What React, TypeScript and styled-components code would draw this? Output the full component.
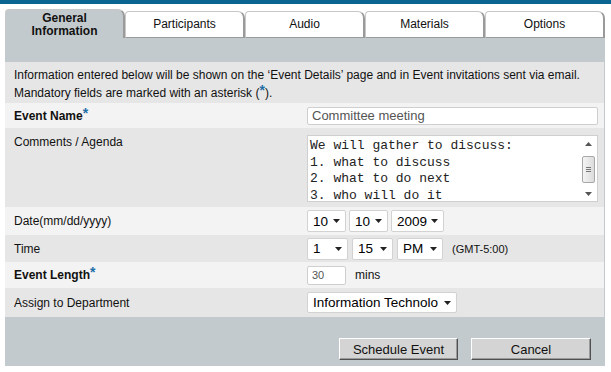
import React from 'react'
import styled, { createGlobalStyle } from 'styled-components'

const GlobalStyle = createGlobalStyle`
  html, body {
    margin: 0;
    padding: 0;
    background: #ffffff;
    font-family: Arial, "Liberation Sans", sans-serif;
    color: #000;
  }
`

const TopBar = styled.div`
  height: 4px;
  background: #0a6690;
`

const Wrapper = styled.div`
  width: 600px;
  margin-left: 5px;
`

const TabRow = styled.div`
  display: flex;
  align-items: flex-end;
  height: 29px;
  margin-top: 5px;
`

const Tab = styled.div<{ $active?: boolean }>`
  box-sizing: border-box;
  width: 120px;
  height: ${p => (p.$active ? '29px' : '27px')};
  display: flex;
  flex-direction: column;
  align-items: center;
  justify-content: center;
  text-align: center;
  background: ${p => (p.$active ? '#c3cacd' : '#ffffff')};
  border: 1px solid #c8c8c8;
  border-right: 2px solid #9a9a9a;
  border-bottom: ${p => (p.$active ? 'none' : '1px solid #9a9a9a')};
  border-radius: 4px 7px 0 0;
  font-size: 12px;
  font-weight: ${p => (p.$active ? 'bold' : 'normal')};
  line-height: 13px;
  color: #111;
  padding-top: ${p => (p.$active ? '1px' : '0')};
`

const Panel = styled.div`
  background: #c3cacd;
  padding-top: 24px;
  padding-bottom: 6px;
`

const Rows = styled.div`
  margin-right: 1px;
`

const Row = styled.div<{ $light?: boolean; $h: number; $top?: boolean }>`
  display: grid;
  grid-template-columns: 302px 1fr;
  align-items: ${p => (p.$top ? 'start' : 'center')};
  height: ${p => p.$h}px;
  box-sizing: border-box;
  background: ${p => (p.$light ? '#f3f3f3' : '#e6e6e6')};
`

const Intro = styled.div`
  background: #e6e6e6;
  height: 41px;
  box-sizing: border-box;
  padding: 4px 9px 0 9px;
  font-size: 12px;
  line-height: 18px;
  color: #111;
`

const Star = styled.span`
  color: #1f6fa8;
  font-weight: bold;
  font-size: 14px;
  position: relative;
  top: -2px;
  line-height: 0;
`

const Label = styled.div<{ $bold?: boolean; $pt?: number }>`
  padding-left: 9px;
  padding-top: ${p => p.$pt ?? 0}px;
  font-size: 12px;
  font-weight: ${p => (p.$bold ? 'bold' : 'normal')};
  color: #111;
`

const Field = styled.div<{ $pt?: number; $gap?: number }>`
  display: flex;
  align-items: center;
  gap: ${p => p.$gap ?? 3}px;
  padding-right: 6px;
  padding-top: ${p => p.$pt ?? 0}px;
`

const TextInput = styled.div<{ $w: string; $h: number; $size: number }>`
  box-sizing: border-box;
  width: ${p => p.$w};
  height: ${p => p.$h}px;
  background: #fff;
  border: 1px solid #cfcfcf;
  border-radius: 2px;
  font-size: ${p => p.$size}px;
  color: #555;
  padding-left: 4px;
  display: flex;
  align-items: center;
`

const TextArea = styled.div`
  box-sizing: border-box;
  width: 291px;
  height: 67px;
  background: #fff;
  border: 1px solid #cfcfcf;
  display: flex;
`

const AreaText = styled.div`
  flex: 1;
  font-family: "Liberation Mono", "Courier New", monospace;
  font-size: 13px;
  line-height: 16.5px;
  color: #222;
  padding: 2px 0 0 2px;
  white-space: pre;
  overflow: hidden;
`

const ScrollBar = styled.div`
  width: 16px;
  display: flex;
  flex-direction: column;
  align-items: center;
  justify-content: space-between;
  padding: 6px 0 5px;
  margin-right: 1px;
`

const Thumb = styled.div`
  box-sizing: border-box;
  width: 13px;
  height: 27px;
  border: 1px solid #a8a8a8;
  border-radius: 2px;
  background: linear-gradient(to right, #f4f4f4, #dcdcdc);
  display: flex;
  flex-direction: column;
  align-items: center;
  justify-content: center;
  gap: 1px;
`

const Grip = styled.div`
  width: 5px;
  height: 1px;
  background: #777;
`

const SelectBox = styled.div<{ $w: number; $h: number }>`
  box-sizing: border-box;
  width: ${p => p.$w}px;
  height: ${p => p.$h}px;
  background: #fff;
  border: 1px solid #d2d2d2;
  border-radius: 2px;
  display: flex;
  align-items: center;
  justify-content: space-between;
  padding: 0 5px 0 5px;
  font-size: 13.5px;
  color: #000;
  white-space: nowrap;
`

const Note = styled.span<{ $ml: number; $size: number }>`
  margin-left: ${p => p.$ml}px;
  font-size: ${p => p.$size}px;
  color: #111;
`

const ButtonBar = styled.div`
  display: flex;
  justify-content: flex-end;
  gap: 13px;
  padding: 21px 14px 0 0;
`

const Button = styled.button<{ $w: number }>`
  box-sizing: border-box;
  width: ${p => p.$w}px;
  height: 22px;
  background: #d4d4d4;
  border: 1px solid;
  border-color: #ffffff #505050 #505050 #ffffff;
  box-shadow: inset -1px -1px 0 #9a9a9a;
  font-family: Arial, "Liberation Sans", sans-serif;
  font-size: 13px;
  color: #111;
  padding: 0;
`

const Arrow = () => (
  <svg width="7" height="4" viewBox="0 0 7 4" style={{ flexShrink: 0 }}>
    <path d="M0 0h7L3.5 4z" fill="#222" />
  </svg>
)

const Select: React.FC<{ w: number; h?: number; value: string }> = ({ w, h = 22, value }) => (
  <SelectBox $w={w} $h={h}>
    <span>{value}</span>
    <Arrow />
  </SelectBox>
)

const tabs = ['Participants', 'Audio', 'Materials', 'Options']

const agenda = 'We will gather to discuss:\n1. what to discuss\n2. what to do next\n3. who will do it'

export default function App() {
  return (
    <>
      <GlobalStyle />
      <TopBar />
      <Wrapper>
        <TabRow>
          <Tab $active>
            <span>General</span>
            <span>Information</span>
          </Tab>
          {tabs.map(t => (
            <Tab key={t}>{t}</Tab>
          ))}
        </TabRow>
        <Panel>
          <Rows>
            <Intro>
              Information entered below will be shown on the ‘Event Details’ page and in Event invitations sent via email.
              <br />
              Mandatory fields are marked with an asterisk (<Star>*</Star>).
            </Intro>
            <Row $light $h={25}>
              <Label $bold>
                Event Name<Star>*</Star>
              </Label>
              <Field>
                <TextInput $w="291px" $h={18} $size={13}>Committee meeting</TextInput>
              </Field>
            </Row>
            <Row $h={79} $top>
              <Label $pt={7}>Comments / Agenda</Label>
              <Field $pt={7}>
                <TextArea>
                  <AreaText>{agenda}</AreaText>
                  <ScrollBar>
                    <svg width="7" height="4" viewBox="0 0 7 4">
                      <path d="M0 4L3.5 0L7 4z" fill="#555" />
                    </svg>
                    <Thumb>
                      <Grip />
                      <Grip />
                      <Grip />
                    </Thumb>
                    <svg width="7" height="4" viewBox="0 0 7 4">
                      <path d="M0 0h7L3.5 4z" fill="#555" />
                    </svg>
                  </ScrollBar>
                </TextArea>
              </Field>
            </Row>
            <Row $light $h={28}>
              <Label>Date(mm/dd/yyyy)</Label>
              <Field>
                <Select w={39} value="10" />
                <Select w={39} value="10" />
                <Select w={53} value="2009" />
              </Field>
            </Row>
            <Row $h={27}>
              <Label>Time</Label>
              <Field $gap={4}>
                <Select w={41} value="1" />
                <Select w={41} value="15" />
                <Select w={46} value="PM" />
                <Note $ml={5} $size={11}>(GMT-5:00)</Note>
              </Field>
            </Row>
            <Row $light $h={26}>
              <Label $bold>
                Event Length<Star>*</Star>
              </Label>
              <Field>
                <TextInput $w="39px" $h={19} $size={11}>30</TextInput>
                <Note $ml={6} $size={12}>mins</Note>
              </Field>
            </Row>
            <Row $h={29}>
              <Label>Assign to Department</Label>
              <Field>
                <Select w={150} h={21} value="Information Technolo" />
              </Field>
            </Row>
          </Rows>
          <ButtonBar>
            <Button $w={119}>Schedule Event</Button>
            <Button $w={120}>Cancel</Button>
          </ButtonBar>
        </Panel>
      </Wrapper>
    </>
  )
}
